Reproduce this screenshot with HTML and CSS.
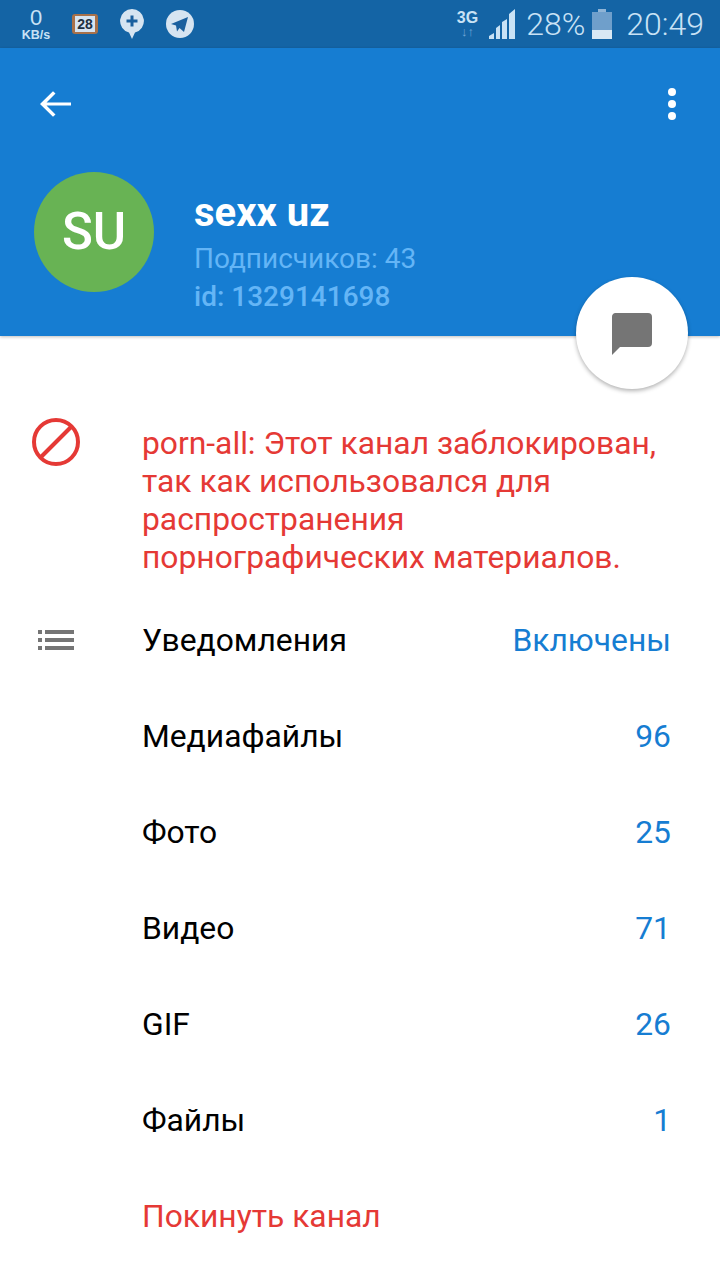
FILE: index.html
```html
<!DOCTYPE html>
<html lang="ru">
<head>
  <meta charset="UTF-8">
  <title>sexx uz</title>
  <link rel="stylesheet" href="styles.css">
</head>
<body>

<div class="status-bar">
  <div class="status-left">
    <div class="speed"><span class="speed-num">0</span><span class="speed-unit">KB/s</span></div>
    <div class="cal-icon">28</div>
    <svg class="st-icon" width="24" height="30" viewBox="0 0 24 30">
      <path d="M12 0a12 12 0 0 1 3 23.600L12 30l-3-6.400A12 12 0 0 1 12 0z" fill="#d6e4f1"/>
      <path d="M10.500 6.500h3v4h4v3h-4v4h-3v-4h-4v-3h4z" fill="#1a5f9e"/>
    </svg>
    <svg class="st-icon" width="28" height="28" viewBox="0 0 28 28">
      <circle cx="14" cy="14" r="14" fill="#d6e4f1"/>
      <path d="M5 14 22 7l-4 15-4.500-4-2.500 3.500-1-6z" fill="#1a5f9e"/>
    </svg>
  </div>
  <div class="status-right">
    <div class="net"><span class="net-3g">3G</span><span class="net-arrows">↓↑</span></div>
    <svg class="signal" width="27" height="30" viewBox="0 0 27 30">
      <path d="M0 30v-3l5-3v6zM7 30V19l4-3v14zM13 30V13l5-3v20zM20 30V5l6-5v30z" fill="#c9e2f5"/>
    </svg>
    <span class="st-text pct">28%</span>
    <div class="battery"><div class="battery-cap"></div><div class="battery-body"><div class="battery-fill"></div></div></div>
    <span class="st-text">20:49</span>
  </div>
</div>

<div class="header">
  <div class="toolbar">
    <svg width="36" height="36" viewBox="0 0 36 36">
      <path d="M34 16.500H9.500l9-9-2.500-2.300L3 18l13 12.800 2.500-2.300-9-9H34z" fill="#fff"/>
    </svg>
    <div class="dots"><i></i><i></i><i></i></div>
  </div>
  <div class="profile">
    <div class="avatar">SU</div>
    <div class="profile-text">
      <div class="name">sexx uz</div>
      <div class="subs">Подписчиков: 43</div>
      <div class="chan-id">id: 1329141698</div>
    </div>
  </div>
  <div class="fab">
    <svg width="42" height="42" viewBox="0 0 42 42">
      <path d="M4 0h33a4 4 0 0 1 4 4v26a4 4 0 0 1-4 4H9l-8 8V4a4 4 0 0 1 3-4z" fill="#757575"/>
    </svg>
  </div>
</div>

<div class="blocked">
  <svg class="ban" width="50" height="50" viewBox="0 0 50 50">
    <circle cx="25" cy="25" r="22" fill="none" stroke="#e53935" stroke-width="4"/>
    <path d="M9.500 40.500l31-31" stroke="#e53935" stroke-width="4"/>
  </svg>
  <p>porn-all: Этот канал заблокирован, так как использовался для распространения порнографических материалов.</p>
</div>

<div class="list">
  <div class="row">
    <svg class="row-icon" width="38" height="24" viewBox="0 0 38 24">
      <path d="M1 2h4v4H1zM8 2h29v4H8zM1 10h4v4H1zM8 10h29v4H8zM1 18h4v4H1zM8 18h29v4H8z" fill="#757575"/>
    </svg>
    <span class="label">Уведомления</span><span class="value">Включены</span>
  </div>
  <div class="row"><span class="label">Медиафайлы</span><span class="value">96</span></div>
  <div class="row"><span class="label">Фото</span><span class="value">25</span></div>
  <div class="row"><span class="label">Видео</span><span class="value">71</span></div>
  <div class="row"><span class="label">GIF</span><span class="value">26</span></div>
  <div class="row"><span class="label">Файлы</span><span class="value">1</span></div>
  <div class="row"><span class="label leave">Покинуть канал</span></div>
</div>

</body>
</html>
```

FILE: styles.css
```css
body {
  margin: 0;
  height: 1280px;
  overflow: hidden;
  background: #fff;
  font-family: Roboto, sans-serif;
}

.status-bar {
  height: 48px;
  background: #1464a5;
  display: flex;
  justify-content: space-between;
  align-items: center;
  padding: 0 16px 0 20px;
  color: #c9e2f5;
}

.status-left,
.status-right {
  display: flex;
  align-items: center;
}

.speed {
  width: 32px;
  display: flex;
  flex-direction: column;
  align-items: center;
  font-family: "Liberation Sans", sans-serif;
  font-weight: 700;
}

.speed-num {
  font-size: 22px;
  line-height: 23px;
  font-weight: 400;
}

.speed-unit {
  font-size: 12.500px;
  line-height: 13px;
}

.cal-icon {
  margin-left: 20px;
  width: 26px;
  height: 20px;
  box-sizing: border-box;
  border: solid #a8714a;
  border-width: 2px 3px;
  border-radius: 3px;
  background: #d6e4f1;
  color: #20303f;
  font: 700 14px/16px "Liberation Sans", sans-serif;
  text-align: center;
}

.st-icon {
  margin-left: 22px;
}

.net {
  display: flex;
  flex-direction: column;
  align-items: center;
  font-family: "Liberation Sans", sans-serif;
  font-weight: 700;
}

.net-3g {
  font-size: 16px;
  line-height: 16px;
}

.net-arrows {
  font-size: 13px;
  line-height: 12px;
  color: #6fa8d8;
}

.signal {
  margin-left: 11px;
}

.st-text {
  font-size: 32px;
  font-weight: 300;
  line-height: 36px;
}

.pct {
  margin-left: 10px;
}

.battery {
  margin-left: 7px;
  margin-right: 14px;
  width: 20px;
}

.battery-cap {
  width: 8px;
  height: 3px;
  margin: 0 auto;
  background: #8fb4d6;
}

.battery-body {
  height: 27px;
  background: #6f9fcb;
  display: flex;
  align-items: flex-end;
}

.battery-fill {
  width: 100%;
  height: 9px;
  background: #d9e8f4;
}

.header {
  position: relative;
  height: 288px;
  background: #167dd2;
  box-shadow: 0 1px 3px rgba(0, 0, 0, 0.25);
}

.toolbar {
  height: 112px;
  display: flex;
  justify-content: space-between;
  align-items: center;
  padding: 0 44px 0 37px;
  box-sizing: border-box;
}

.dots {
  display: flex;
  flex-direction: column;
  gap: 4px;
}

.dots i {
  display: block;
  width: 8px;
  height: 8px;
  border-radius: 50%;
  background: #fff;
}

.profile {
  display: flex;
  align-items: flex-start;
  padding: 12px 0 0 34px;
}

.avatar {
  width: 120px;
  height: 120px;
  border-radius: 50%;
  background: #68b354;
  color: #fff;
  font-size: 51px;
  font-weight: 500;
  line-height: 120px;
  text-align: center;
}

.profile-text {
  margin-left: 40px;
}

.name {
  color: #fff;
  font-size: 40px;
  font-weight: 700;
  line-height: 46px;
  margin-top: 18px;
}

.subs {
  color: #64b5f6;
  font-size: 28px;
  line-height: 38px;
  margin-top: 4px;
}

.chan-id {
  color: #64b5f6;
  font-size: 28px;
  font-weight: 500;
  line-height: 38px;
}

/* floats over the header edge */
.fab {
  position: absolute;
  right: 32px;
  top: 229px;
  width: 112px;
  height: 112px;
  border-radius: 50%;
  background: #fff;
  box-shadow: 0 2px 4px rgba(0, 0, 0, 0.3);
  display: flex;
  align-items: center;
  justify-content: center;
}

.fab svg {
  margin-top: 2px;
}

.blocked {
  display: flex;
  padding: 81px 48px 0 31px;
}

.ban {
  flex: none;
}

.blocked p {
  margin: 7px 0 0 61px;
  color: #e53935;
  font-size: 31.800px;
  line-height: 38px;
}

.list {
  margin-top: 16px;
}

.row {
  position: relative;
  height: 96px;
  display: flex;
  justify-content: space-between;
  align-items: center;
  padding: 0 49px 0 142px;
  font-size: 31.800px;
}

.row-icon {
  position: absolute;
  left: 37px;
  top: 36px;
}

.label {
  color: #000;
}

.label.leave {
  color: #e53935;
}

.value {
  color: #167dd2;
}
```
